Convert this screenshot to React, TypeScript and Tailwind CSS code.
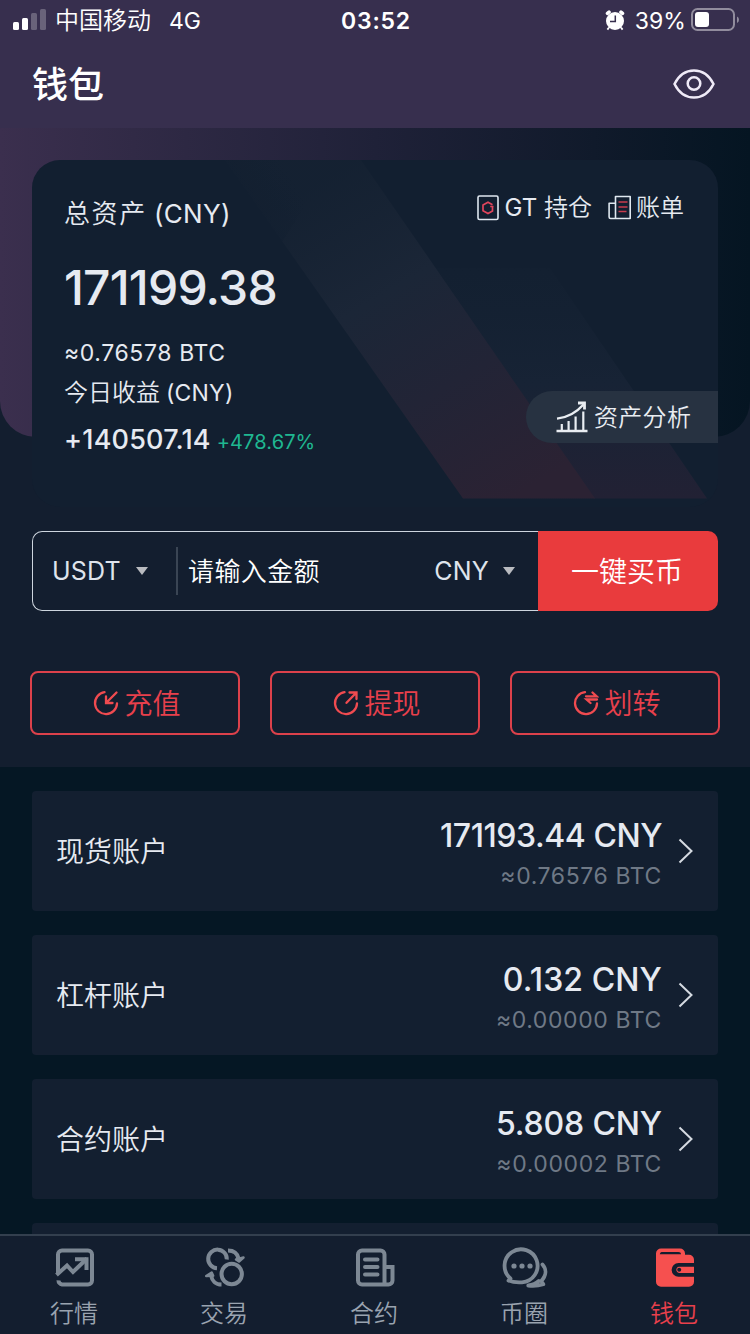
import type { ReactNode } from 'react'

const accounts = [
  { name: '现货账户', amount: '171193.44 CNY', btc: '≈0.76576 BTC', tracking: 'tracking-[-0.450px]' },
  { name: '杠杆账户', amount: '0.132 CNY', btc: '≈0.00000 BTC', tracking: 'tracking-[0.100px]' },
  { name: '合约账户', amount: '5.808 CNY', btc: '≈0.00002 BTC', tracking: 'tracking-[-0.150px]' },
]

const StatusBar = () => (
  <div className="flex h-10 items-center pr-[11px] pl-[13px] text-white">
    <svg width="33" height="22" viewBox="0 0 33 22" fill="#fff">
      <rect x="0" y="13" width="6" height="8" rx="1.5" />
      <rect x="9" y="9" width="6" height="12" rx="1.5" />
      <rect x="18" y="4" width="6" height="17" rx="1.5" opacity="0.25" />
      <rect x="27" y="0" width="6" height="21" rx="1.5" opacity="0.25" />
    </svg>
    <span className="mt-0.5 ml-[9px] text-2xl font-[350]">中国移动</span>
    <span className="mt-0.5 ml-[18px] w-[172px] text-[23px]">4G</span>
    <span className="mt-0.5 text-[23px] font-semibold tracking-[0.8px] whitespace-nowrap">
      03:52
    </span>
    <svg className="ml-auto" width="20" height="21" viewBox="0 0 20 21">
      <circle cx="10" cy="11" r="9" fill="#fff" />
      <path
        d="M2.500 3.300 4 2.100M17.500 3.300 16 2.100"
        stroke="#fff"
        strokeWidth="3.6"
        strokeLinecap="round"
      />
      <path d="M4 17.5 2.4 19.6M16 17.5l1.6 2.1" stroke="#fff" strokeWidth="1.8" />
      <path d="M10.3 5.500v6H5" fill="none" stroke="#372f4e" strokeWidth="1.5" />
    </svg>
    <span className="mt-0.5 ml-[10px] text-[23px] tracking-[0.1px]">39%</span>
    <svg className="ml-[5px]" width="48" height="24" viewBox="0 0 48 24">
      <rect
        x="1"
        y="1"
        width="42"
        height="21"
        rx="5.5"
        fill="none"
        stroke="#fff"
        strokeOpacity="0.45"
        strokeWidth="2"
      />
      <rect x="4" y="4" width="14" height="15" rx="3" fill="#fff" />
      <path d="M46 8.5q2 1 2 3.2t-2 3.2z" fill="#fff" opacity="0.45" />
    </svg>
  </div>
)

const EyeIcon = () => (
  <svg width="42" height="30" viewBox="0 0 42 30" fill="none" stroke="#efeaf7" strokeWidth="2.5">
    <path d="M1.5 15C6 6 13 1.5 21 1.5S36 6 40.5 15C36 24 29 28.5 21 28.5S6 24 1.5 15Z" />
    <circle cx="21" cy="14.5" r="6.3" />
  </svg>
)

const HoldingIcon = () => (
  <svg width="22" height="26" viewBox="0 0 22 26" fill="none">
    <rect x="1" y="1" width="20" height="23.5" rx="1.5" stroke="#dfe8f0" strokeWidth="1.6" />
    <path
      d="m15.500 9.700-4.500-2.500-5 2.800v5.800l5 2.800 4.500-2.500v-3.800M13.200 11.500h3.300"
      stroke="#e0455c"
      strokeWidth="1.7"
    />
  </svg>
)

const BillIcon = () => (
  <svg width="24" height="25" viewBox="0 0 24 25" fill="none">
    <path
      d="M7.5 1.5h14.7v22H2.7a1.6 1.6 0 0 1-1.6-1.6V8.2h6.4zM7.5 8v15.5"
      stroke="#dfe8f0"
      strokeWidth="1.6"
      strokeLinejoin="round"
    />
    <path d="M10.5 7h9M10.5 12h9M10.5 16.500h8" stroke="#c93c4e" strokeWidth="1.700" />
  </svg>
)

const AnalysisIcon = () => (
  <svg width="32" height="32" viewBox="0 0 32 32" fill="none" stroke="#e9edf2">
    <path d="M.5 30h31" strokeWidth="2.6" />
    <path d="M5.8 23v7M12.6 20v10M19.6 15.5V30M27.3 10.5V30" strokeWidth="2.2" />
    <path d="M1 17.6C12 16.500 20 12 27.500 3.500" strokeWidth="2.4" />
    <path d="M22 2h6.500v6.500" strokeWidth="2.8" />
  </svg>
)

const Caret = () => (
  <svg width="12" height="8" viewBox="0 0 12 8">
    <path d="M0 0h12L6 8z" fill="#b9bbc0" />
  </svg>
)

const ActionIcon = ({ children }: { children: ReactNode }) => (
  <svg
    width="26"
    height="26"
    viewBox="0 0 26 26"
    fill="none"
    stroke="#f04b50"
    strokeWidth="2.3"
    strokeLinecap="round"
  >
    {children}
  </svg>
)

const actions = [
  {
    label: '充值',
    icon: (
      <ActionIcon>
        <path d="M11.5 2.200A11 11 0 1 0 24 13.500M23.500 2.500 13.500 12.500M13 6.500v6.500h6.500" />
      </ActionIcon>
    ),
  },
  {
    label: '提现',
    icon: (
      <ActionIcon>
        <path d="M11.5 2.200A11 11 0 1 0 24 13.500M13.500 12.800 23 3M16.500 2.500h7V9" />
      </ActionIcon>
    ),
  },
  {
    label: '划转',
    icon: (
      <ActionIcon>
        <path d="M12 2.200A11 11 0 1 0 24 13.500M13 6.300h10.500L19.500 2.500M24 9.500H13.500l4 3.500" />
      </ActionIcon>
    ),
  },
]

const tabs = [
  {
    label: '行情',
    icon: (
      <svg width="44" height="44" viewBox="0 0 44 44" fill="none" stroke="#7d8894" strokeWidth="4">
        <path d="M5 29V9.500A4 4 0 0 1 9 5.500h26a4 4 0 0 1 4 4v26a4 4 0 0 1-4 4H9a4 4 0 0 1-3.500-4.200" />
        <path d="m3.500 30 10.500-9.500 6 6.500L34 13.500" />
        <path d="M22 14.300h11.500V25" />
      </svg>
    ),
  },
  {
    label: '交易',
    icon: (
      <svg width="44" height="44" viewBox="0 0 44 44" fill="none" stroke="#7d8894" strokeWidth="4">
        <path d="M14 23.200A9.300 9.300 0 1 1 23.800 14.500" />
        <circle cx="28.700" cy="29" r="10.200" />
        <path d="M25 5.500c6 0 9.500 3.500 10.500 8" />
        <path d="m33 14.500 7.500-2-4.500 4z" fill="#7d8894" strokeWidth="2.500" strokeLinejoin="round" />
        <path d="M18.500 39.500c-6 0-9.500-4-10.300-8.500" />
        <path d="m3.200 31 5.500-3.500 1.500 3.200z" fill="#7d8894" strokeWidth="2.500" strokeLinejoin="round" />
      </svg>
    ),
  },
  {
    label: '合约',
    icon: (
      <svg width="44" height="44" viewBox="0 0 44 44" fill="none" stroke="#7d8894" strokeWidth="4">
        <path d="M31.500 39.500H9a4 4 0 0 1-4-4v-26a4 4 0 0 1 4-4h18.500a4 4 0 0 1 4 4v30h4a4 4 0 0 0 4-4V22h-8" />
        <path d="M12 14.500h12.500M12 22h12.500M12 29.500h12.500" strokeLinecap="round" />
      </svg>
    ),
  },
  {
    label: '币圈',
    icon: (
      <svg
        width="48"
        height="44"
        viewBox="0 0 48 44"
        fill="none"
        stroke="#7d8894"
        strokeWidth="3.8"
        strokeLinecap="round"
        strokeLinejoin="round"
      >
        <path d="M9.500 33.500A16.500 16.500 0 1 1 21 37.300c-5 .3-9 .2-13.500-1.800z" />
        <path d="M41.500 19.500c4.500 5 3.500 11.500-1.200 16.500l2 3.300c-5 1.500-10 1.700-15 1.200 4.500-.5 8-2.200 10.500-4.500" />
        <g fill="#7d8894" stroke="none">
          <circle cx="13" cy="21" r="2.600" />
          <circle cx="21" cy="21" r="2.600" />
          <circle cx="29" cy="21" r="2.600" />
        </g>
      </svg>
    ),
  },
  {
    label: '钱包',
    active: true,
    icon: (
      <svg width="44" height="44" viewBox="0 0 44 44">
        <path
          d="M3 8.500a5 5 0 0 1 5-5h19a5 5 0 0 1 5 5v1.200h4a5 5 0 0 1 5 5v22a5 5 0 0 1-5 5H8a5 5 0 0 1-5-5z"
          fill="#f6504f"
        />
        <path d="M6.800 9.200c.4-2 1.500-2.200 3-2.200h15.500c2 0 2.500.8 2.700 2.200z" fill="#131e2f" />
        <path d="M42 18H25.500a6.800 6.800 0 0 0 0 13.700H42v-3.700H26a3.200 3.200 0 0 1 0-6.300h16z" fill="#131e2f" />
        <circle cx="26.200" cy="24.800" r="2" fill="#131e2f" />
      </svg>
    ),
  },
]

const AssetCard = () => (
  <div className="relative h-[347px] overflow-hidden rounded-[28px] bg-[#121f30] pl-8">
    <svg className="absolute top-0 left-0" width="686" height="347" viewBox="0 0 686 347">
      <defs>
        <linearGradient id="beam" x1="290" y1="20" x2="480" y2="338" gradientUnits="userSpaceOnUse">
          <stop offset="0" stopColor="#182434" stopOpacity="0.4" />
          <stop offset="0.35" stopColor="#1b2637" />
          <stop offset="0.65" stopColor="#222436" />
          <stop offset="1" stopColor="#2b2233" />
        </linearGradient>
        <linearGradient id="beamFade" x1="215" y1="90" x2="280" y2="50" gradientUnits="userSpaceOnUse">
          <stop offset="0" stopColor="#121f30" />
          <stop offset="1" stopColor="#121f30" stopOpacity="0" />
        </linearGradient>
        <linearGradient id="beamSide" x1="0" y1="108" x2="0" y2="338" gradientUnits="userSpaceOnUse">
          <stop offset="0" stopColor="#152233" stopOpacity="0.3" />
          <stop offset="0.5" stopColor="#172335" />
          <stop offset="1" stopColor="#222134" />
        </linearGradient>
      </defs>
      <path d="M404 108h114l157 230.500H562z" fill="url(#beamSide)" />
      <path d="M193 0h136l234 338.500H431z" fill="url(#beam)" />
      <path d="M193 0h110L250 82z" fill="url(#beamFade)" />
    </svg>
    <div className="relative flex flex-col text-[#e6eaf1]">
      <div className="mt-[33px] flex h-10 items-center text-[26px] whitespace-nowrap">
        <span className="w-[90px] font-[350] tracking-[1.600px]">总资产</span>
        <span className="tracking-[0.300px]">(CNY)</span>
        <div className="mr-[34px] mb-[11px] ml-auto flex items-center text-2xl">
          <HoldingIcon />
          <span className="mt-px ml-[6px]">
            GT <span className="font-[350]">持仓</span>
          </span>
          <span className="ml-4">
            <BillIcon />
          </span>
          <span className="mt-px ml-1 font-[350]">账单</span>
        </div>
      </div>
      <p className="mt-[25px] h-[60px] text-5xl leading-[60px] font-medium tracking-[-0.800px]">
        171199.38
      </p>
      <p className="mt-[15px] h-10 text-[23px] leading-10 tracking-[0.600px]">≈0.76578 BTC</p>
      <p className="flex h-10 text-2xl leading-10">
        <span className="w-[102px] font-[350]">今日收益</span>
        <span className="text-[23px] tracking-[0.200px]">(CNY)</span>
      </p>
      <p className="mt-[7px] flex h-10 items-baseline leading-10">
        <span className="text-[27px] font-medium tracking-[0.200px]">+140507.14</span>
        <span className="ml-[6px] text-[20px] tracking-[0.100px] text-[#1fb791]">+478.67%</span>
      </p>
    </div>
    <div className="absolute top-[231px] right-0 flex h-[52px] w-48 items-center rounded-l-full bg-[#273241] pl-[30px] text-2xl text-[#e9edf2]">
      <AnalysisIcon />
      <span className="mt-px ml-[6px] font-[350] tracking-[0.300px]">资产分析</span>
    </div>
  </div>
)

const QuickBuy = () => (
  <div className="mt-6 flex h-20">
    <div className="flex flex-1 items-center rounded-l-[10px] border border-r-0 border-[#cdd5de] pl-[19px] text-[26px] text-[#dfe4ec]">
      <span className="mt-0.5 w-[84px] text-[25px] tracking-[0.200px]">USDT</span>
      <Caret />
      <span className="ml-[28px] h-12 w-0.5 bg-[#3a4554]" />
      <span className="ml-[10px] font-[350] tracking-[0.400px] text-white">请输入金额</span>
      <span className="mt-0.5 mr-[14px] ml-auto text-[25px] tracking-[0.200px]">CNY</span>
      <Caret />
      <span className="w-[23px]" />
    </div>
    <button className="w-[180px] rounded-r-[10px] bg-[#e93b3d] pt-0.5 pr-0.5 text-[28px] font-[350] text-white">
      一键买币
    </button>
  </div>
)

const App = () => {
  return (
    <div className="flex h-[1334px] w-[750px] flex-col overflow-hidden bg-[#051724] font-['Inter','Noto_Sans_CJK_SC',sans-serif]">
      <header className="h-32 shrink-0 bg-[#372f4e]">
        <StatusBar />
        <div className="flex h-[88px] items-center justify-between pr-[35px] pl-8">
          <h1 className="mt-0.5 text-4xl font-medium text-white">钱包</h1>
          <EyeIcon />
        </div>
      </header>

      <section className="relative h-[639px] shrink-0 bg-[#131e2f]">
        <div className="absolute inset-x-0 top-0 h-[309px] rounded-b-[36px] bg-linear-to-r from-[#3b2f4e] via-[#1f2138] to-[#051522]" />
        <div className="relative px-8 pt-8">
          <AssetCard />
          <QuickBuy />
        </div>
        <div className="mt-[60px] flex gap-[30px] px-[30px]">
          {actions.map((action) => (
            <button
              key={action.label}
              className="flex h-16 flex-1 items-center justify-center gap-[5px] rounded-lg border-2 border-[#dc414b] pl-1 text-[28px] font-[350] text-[#e8404c]"
            >
              {action.icon}
              <span className="mt-0.5">{action.label}</span>
            </button>
          ))}
        </div>
      </section>

      <main className="flex min-h-0 flex-1 flex-col gap-6 overflow-hidden px-8 pt-6">
        {accounts.map((account) => (
          <article
            key={account.name}
            className="flex h-[120px] shrink-0 items-center rounded bg-[#131f30] pr-[25px] pl-6"
          >
            <p className="mt-0.5 text-[28px] font-[350] text-[#e6eaf1]">{account.name}</p>
            <div className="mt-[5px] ml-auto text-right">
              <p
                className={`h-11 text-[32px] leading-11 font-medium text-[#e6eaf1] ${account.tracking}`}
              >
                {account.amount}
              </p>
              <p className="h-9 text-[23px] leading-9 tracking-[0.600px] text-[#6f7986]">
                {account.btc}
              </p>
            </div>
            <svg className="ml-4" width="15" height="26" viewBox="0 0 15 26" fill="none">
              <path d="m1.500 1.500 12 11.500-12 11.500" stroke="#d5dae1" strokeWidth="2" />
            </svg>
          </article>
        ))}
        <div className="h-[120px] shrink-0 rounded bg-[#131f30]" />
      </main>

      <nav className="flex h-[100px] shrink-0 border-t-2 border-[#333f4e] bg-[#131e2f]">
        {tabs.map((tab) => (
          <div key={tab.label} className="flex flex-1 flex-col items-center pt-[9px]">
            {tab.icon}
            <span
              className={
                tab.active
                  ? 'mt-[7px] mr-0.5 text-2xl leading-9 font-[350] text-[#e8404c]'
                  : 'mt-[7px] mr-0.5 text-2xl leading-9 font-[350] text-[#9aa3af]'
              }
            >
              {tab.label}
            </span>
          </div>
        ))}
      </nav>
    </div>
  )
}

export default App
